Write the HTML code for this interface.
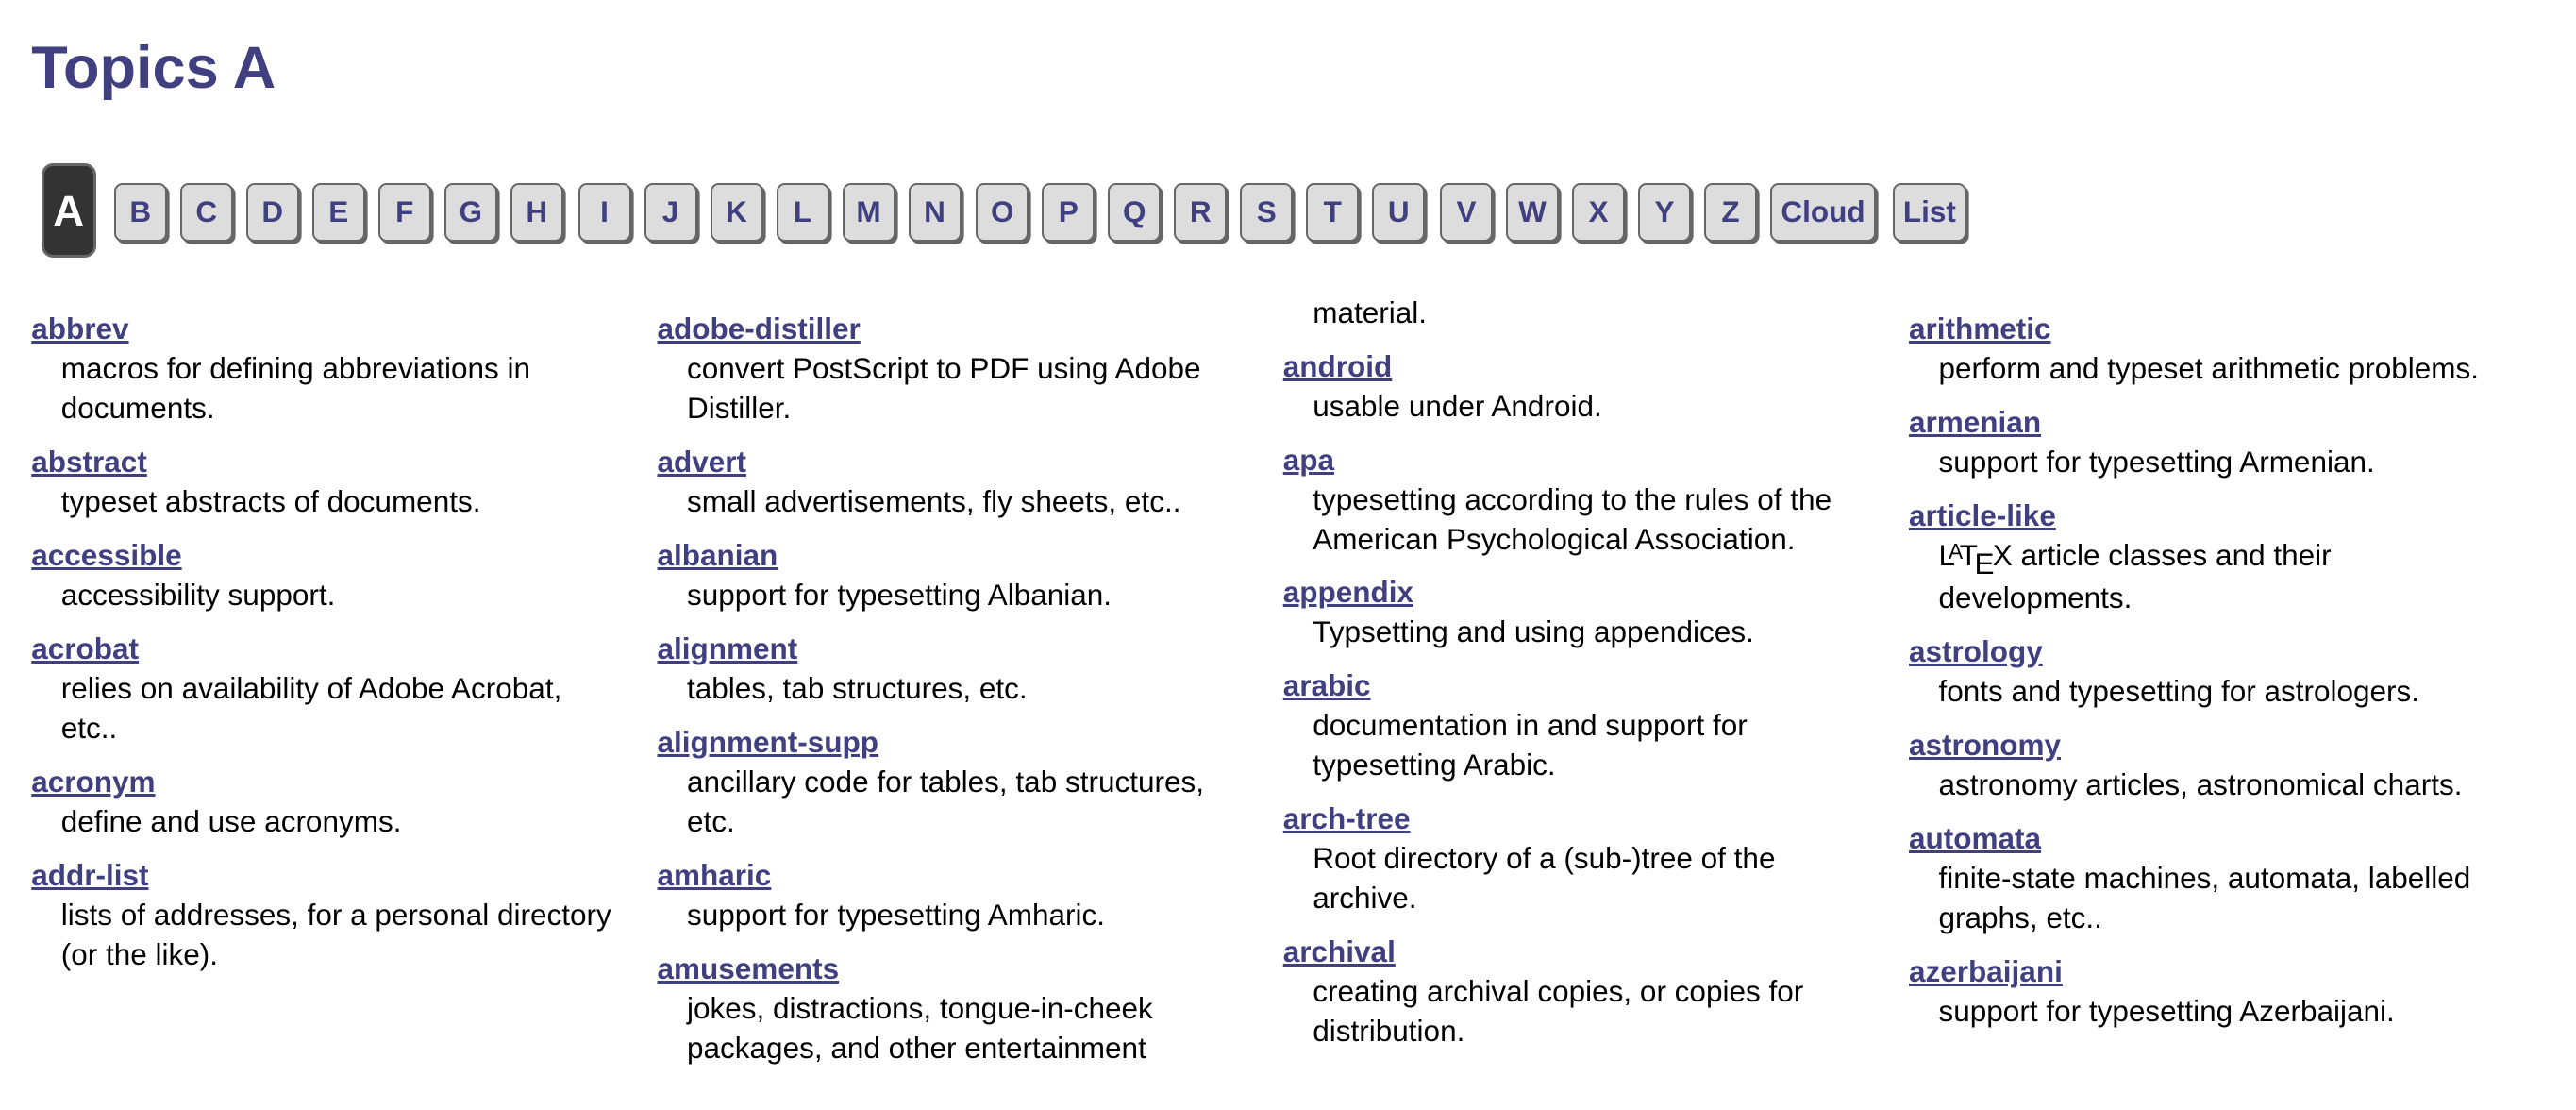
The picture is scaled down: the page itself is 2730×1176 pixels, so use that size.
<!DOCTYPE html>
<html><head><meta charset="utf-8">
<style>
html,body{margin:0;padding:0;background:#fff;}
body{zoom:1.75;width:1560px;height:672px;overflow:hidden;position:relative;font-family:"Liberation Sans",Arial,sans-serif;color:#000;}
h1{position:absolute;left:19px;top:14px;margin:0;font-size:36px;font-weight:bold;color:#404080;line-height:54px;}
.nav{position:absolute;left:25px;top:99px;height:60px;}
.b{position:absolute;top:12px;height:35px;min-width:28px;padding:0 0px;box-sizing:border-box;background:#ddd;border:1.5px solid #666;box-shadow:1.5px 1.5px 0 #666;border-radius:5px;font-weight:bold;font-size:18px;color:#404080;text-align:center;line-height:33px;}
.b.a{top:0;height:57px;width:33px;background:#333;color:#fff;font-size:26px;line-height:55px;border:2px solid #666;border-radius:7px;box-shadow:none;}
.col{position:absolute;width:359px;font-size:18px;line-height:24px;}
.col a{color:#404080;font-weight:bold;text-decoration:underline;display:block;}
.col p{margin:0 0 8.5px 18px;}
</style></head><body>
<h1>Topics A</h1>
<div class="nav">
<div class="b a" style="left:0">A</div>
<div class="b" style="left:44px;width:32px">B</div>
<div class="b" style="left:84px;width:32px">C</div>
<div class="b" style="left:124px;width:32px">D</div>
<div class="b" style="left:164px;width:32px">E</div>
<div class="b" style="left:204px;width:32px">F</div>
<div class="b" style="left:244px;width:32px">G</div>
<div class="b" style="left:284px;width:32px">H</div>
<div class="b" style="left:325px;width:32px">I</div>
<div class="b" style="left:365px;width:32px">J</div>
<div class="b" style="left:405px;width:32px">K</div>
<div class="b" style="left:445px;width:32px">L</div>
<div class="b" style="left:485px;width:32px">M</div>
<div class="b" style="left:525px;width:32px">N</div>
<div class="b" style="left:566px;width:32px">O</div>
<div class="b" style="left:606px;width:32px">P</div>
<div class="b" style="left:646px;width:32px">Q</div>
<div class="b" style="left:686px;width:32px">R</div>
<div class="b" style="left:726px;width:32px">S</div>
<div class="b" style="left:766px;width:32px">T</div>
<div class="b" style="left:806px;width:32px">U</div>
<div class="b" style="left:847px;width:32px">V</div>
<div class="b" style="left:887px;width:32px">W</div>
<div class="b" style="left:927px;width:32px">X</div>
<div class="b" style="left:967px;width:32px">Y</div>
<div class="b" style="left:1007px;width:32px">Z</div>
<div class="b" style="left:1047px;width:64px">Cloud</div>
<div class="b" style="left:1121px;width:45px">List</div>
</div>

<div class="col" style="left:19px;top:187px">
<a>abbrev</a><p>macros for defining abbreviations in documents.</p>
<a>abstract</a><p>typeset abstracts of documents.</p>
<a>accessible</a><p>accessibility support.</p>
<a>acrobat</a><p>relies on availability of Adobe Acrobat,<br>etc..</p>
<a>acronym</a><p>define and use acronyms.</p>
<a>addr-list</a><p>lists of addresses, for a personal directory (or the like).</p>
</div>

<div class="col" style="left:398px;top:187px">
<a>adobe-distiller</a><p>convert PostScript to PDF using Adobe Distiller.</p>
<a>advert</a><p>small advertisements, fly sheets, etc..</p>
<a>albanian</a><p>support for typesetting Albanian.</p>
<a>alignment</a><p>tables, tab structures, etc.</p>
<a>alignment-supp</a><p>ancillary code for tables, tab structures,<br>etc.</p>
<a>amharic</a><p>support for typesetting Amharic.</p>
<a>amusements</a><p>jokes, distractions, tongue-in-cheek packages, and other entertainment</p>
</div>

<div class="col" style="left:777px;top:177px">
<p>material.</p>
<a>android</a><p>usable under Android.</p>
<a>apa</a><p>typesetting according to the rules of the American Psychological Association.</p>
<a>appendix</a><p>Typsetting and using appendices.</p>
<a>arabic</a><p>documentation in and support for typesetting Arabic.</p>
<a>arch-tree</a><p>Root directory of a (sub-)tree of the<br>archive.</p>
<a>archival</a><p>creating archival copies, or copies for distribution.</p>
</div>

<div class="col" style="left:1156px;top:187px">
<a>arithmetic</a><p>perform and typeset arithmetic problems.</p>
<a>armenian</a><p>support for typesetting Armenian.</p>
<a>article-like</a><p>L<span style="font-size:13px;position:relative;top:-4px;margin-left:-4px;margin-right:-2px">A</span>T<span style="position:relative;top:5px;margin-left:-2px;margin-right:-1px">E</span>X article classes and their developments.</p>
<a>astrology</a><p>fonts and typesetting for astrologers.</p>
<a>astronomy</a><p>astronomy articles, astronomical charts.</p>
<a>automata</a><p>finite-state machines, automata, labelled graphs, etc..</p>
<a>azerbaijani</a><p>support for typesetting Azerbaijani.</p>
</div>
</body></html>
